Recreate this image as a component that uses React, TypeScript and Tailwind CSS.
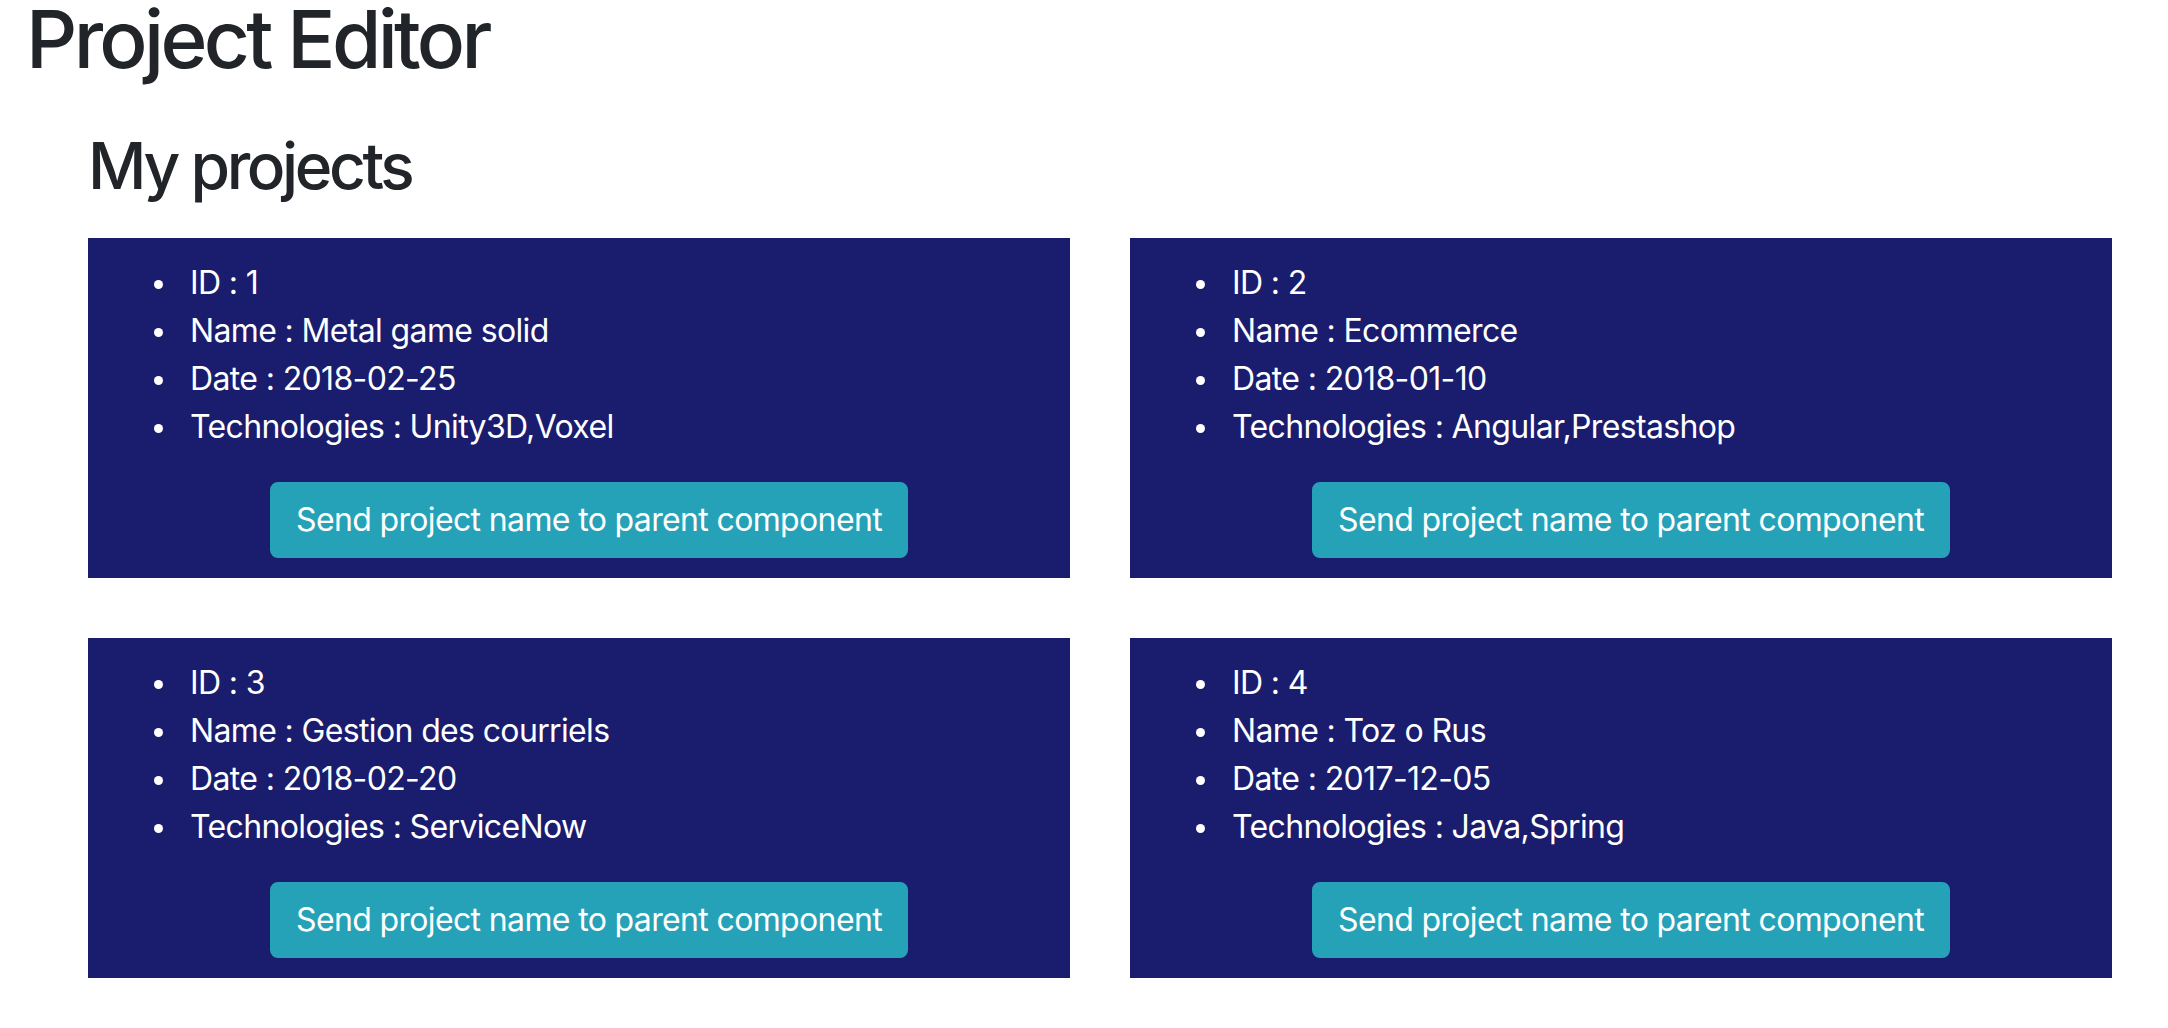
const projects = [
  { id: 1, name: "Metal game solid", date: "2018-02-25", tech: "Unity3D,Voxel" },
  { id: 2, name: "Ecommerce", date: "2018-01-10", tech: "Angular,Prestashop" },
  { id: 3, name: "Gestion des courriels", date: "2018-02-20", tech: "ServiceNow" },
  { id: 4, name: "Toz o Rus", date: "2017-12-05", tech: "Java,Spring" },
];

function Item({ children }: { children: React.ReactNode }) {
  return (
    <li className="flex items-start">
      <span className="w-[9px] h-[9px] rounded-full bg-white mt-[21px] ml-[46px] mr-[27px] shrink-0" />
      <span>{children}</span>
    </li>
  );
}

function ProjectCard({ project }: { project: (typeof projects)[number] }) {
  return (
    <div className="bg-[#1a1c6e] text-white pl-[20px] pt-[21px] pb-[20px]">
      <ul className="mb-[31px] text-[32px] leading-[48px] tracking-[-0.64px]">
        <Item>ID : {project.id}</Item>
        <Item>Name : {project.name}</Item>
        <Item>Date : {project.date}</Item>
        <Item>Technologies : {project.tech}</Item>
      </ul>
      <div className="flex justify-center">
        <button className="bg-[#25a2b8] border-2 border-[#25a2b8] rounded-[8px] px-[24px] py-[12px] text-[32px] leading-[48px] tracking-[-0.64px] text-white">
          Send project name to parent component
        </button>
      </div>
    </div>
  );
}

export default function App() {
  return (
    <div className="min-h-screen bg-white text-[#212529] font-['Inter',sans-serif]">
      <h1 className="pl-[26px] text-[80px] leading-[78px] font-medium tracking-[-3.7px]">Project Editor</h1>
      <main className="pl-[88px] pt-[49px]">
        <h2 className="text-[64px] leading-[77px] font-medium tracking-[-3.4px] mb-[34px]">My projects</h2>
        <div className="grid grid-cols-[982px_982px] gap-[60px]">
          {projects.map((p) => (
            <ProjectCard key={p.id} project={p} />
          ))}
        </div>
      </main>
    </div>
  );
}
